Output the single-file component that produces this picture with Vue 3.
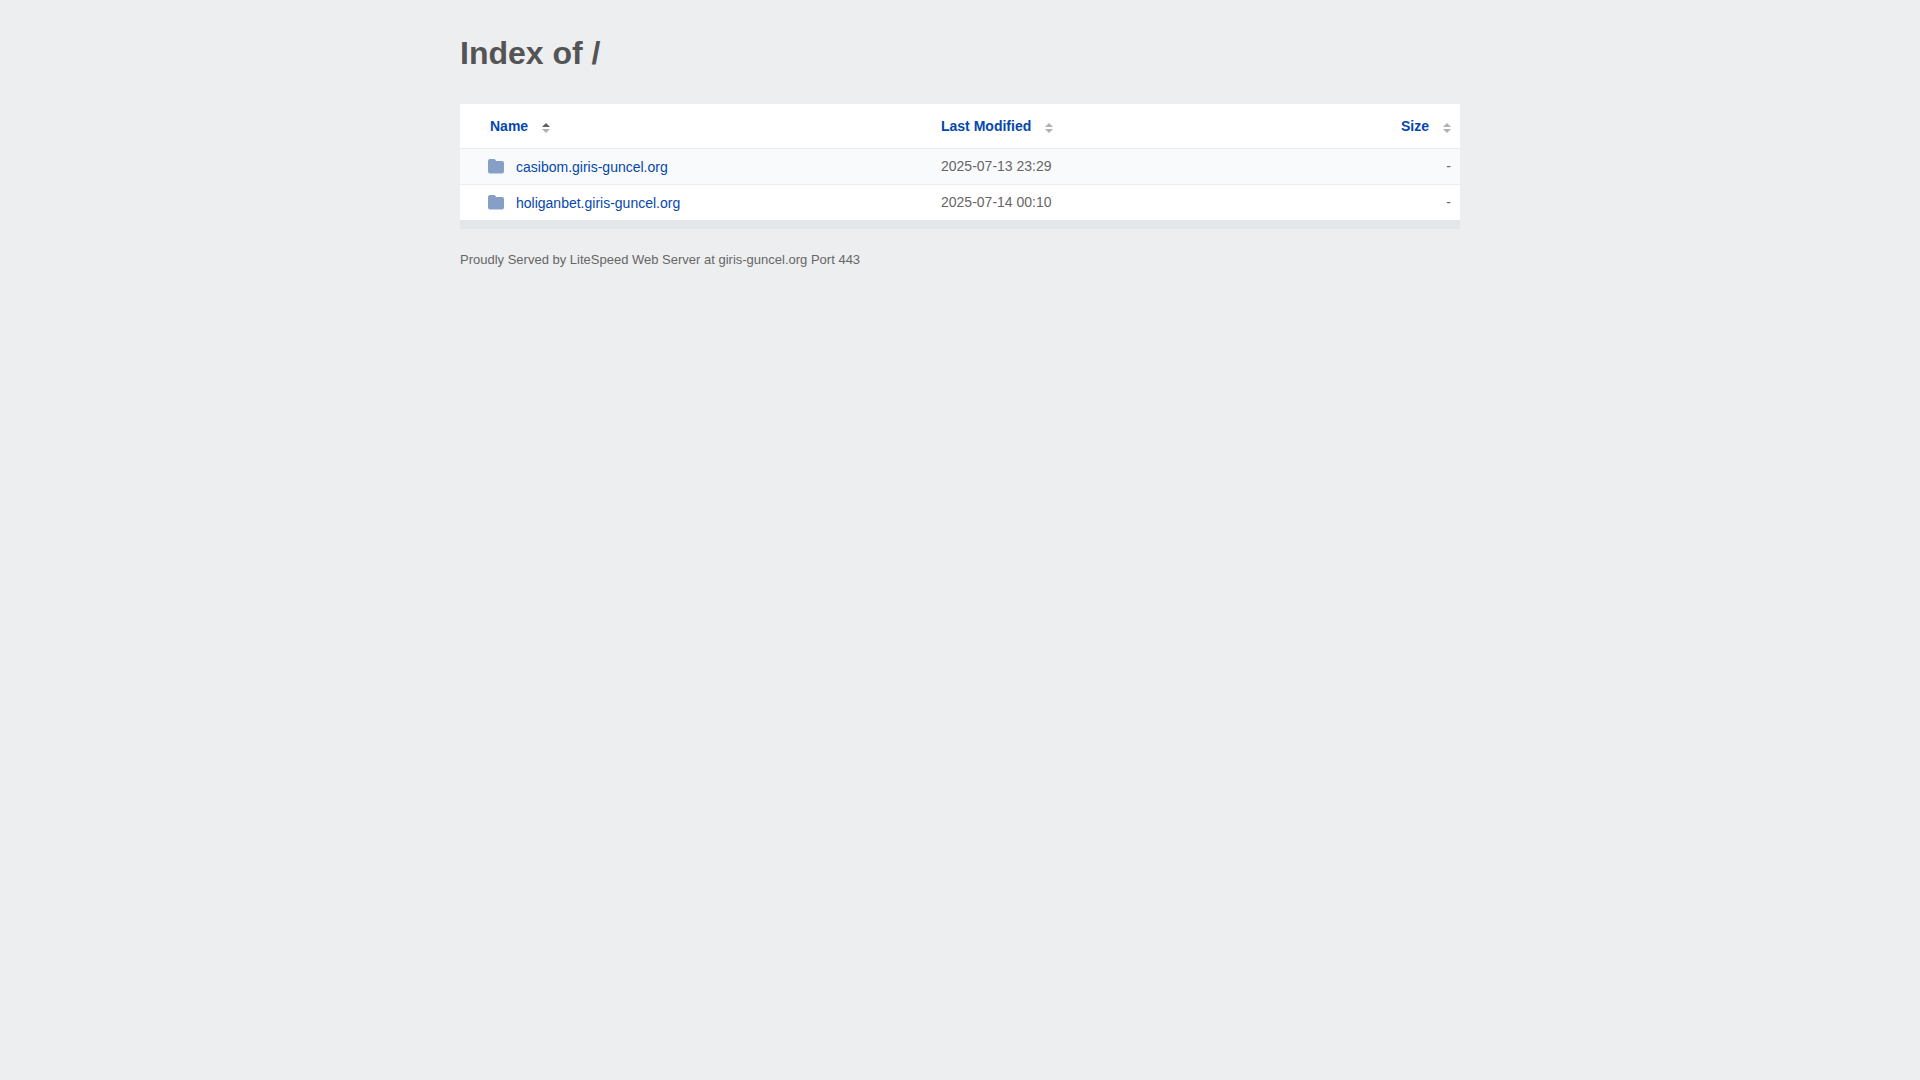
<script setup>
const columns = [
  { key: 'name', label: 'Name', sorted: true },
  { key: 'modified', label: 'Last Modified', sorted: false },
  { key: 'size', label: 'Size', sorted: false },
]

const entries = [
  { name: 'casibom.giris-guncel.org', modified: '2025-07-13 23:29', size: '-' },
  { name: 'holiganbet.giris-guncel.org', modified: '2025-07-14 00:10', size: '-' },
]
</script>

<template>
  <main class="page">
    <h1 class="title">Index of /</h1>
    <table class="listing">
      <thead>
        <tr>
          <th v-for="col in columns" :key="col.key" :class="col.key" scope="col">
            <a class="sort" href="#">
              {{ col.label }}
              <svg class="arrows" :class="{ sorted: col.sorted }" width="8" height="10" viewBox="0 0 8 10" aria-hidden="true">
                <path class="up" d="M0 4 L4 0 L8 4 Z" />
                <path class="down" d="M0 6 L8 6 L4 10 Z" />
              </svg>
            </a>
          </th>
        </tr>
      </thead>
      <tbody>
        <tr v-for="entry in entries" :key="entry.name">
          <td class="name">
            <a class="entry" :href="`/${entry.name}/`">
              <svg class="folder" width="16" height="15" viewBox="0 0 16 15" aria-hidden="true">
                <path d="M2 0 H6 Q7 0 7.5 1 L8 2 H14 Q16 2 16 4 V12.500 Q16 14.500 14 14.500 H2 Q0 14.500 0 12.500 V2 Q0 0 2 0 Z" />
              </svg>
              <span class="label">{{ entry.name }}</span>
            </a>
          </td>
          <td class="modified">{{ entry.modified }}</td>
          <td class="size">{{ entry.size }}</td>
        </tr>
      </tbody>
    </table>
    <footer class="footer">Proudly Served by LiteSpeed Web Server at giris-guncel.org Port 443</footer>
  </main>
</template>

<style>
body {
  background: #edeef0;
}
</style>

<style scoped>
.page {
  box-sizing: border-box;
  max-width: 1040px;
  margin: 0 auto;
  padding: 32px 20px;
  color: #545454;
  font-family: Arial, "Liberation Sans", sans-serif;
  font-size: 14px;
  line-height: 20px;
}

.title {
  margin: 0 0 30px;
  font-size: 32px;
  line-height: 42px;
}

.listing {
  width: 100%;
  table-layout: fixed;
  border-collapse: separate;
  border-spacing: 0;
  border-bottom: 9px solid #e3e7ea;
  background: #fff;
}

th,
td {
  padding: 0 9px;
  text-align: left;
}

th {
  height: 44px;
}

td {
  height: 28px;
  padding-top: 7px;
  border-top: 1px solid #e9ebee;
  color: #666;
  vertical-align: top;
}

tbody tr:nth-child(odd) {
  background: #f8fafc;
}

th.name {
  width: 433px;
  padding-left: 30px;
}

td.name {
  padding-left: 28px;
}

th.size,
td.size {
  width: 200px;
  text-align: right;
}

a {
  color: #0547ad;
  text-decoration: none;
}

.sort {
  display: inline-flex;
  align-items: center;
  gap: 14px;
}

.arrows {
  margin-top: 4px;
  fill: #b0b0b0;
}

.sorted .up {
  fill: #606060;
}

.entry {
  display: flex;
  align-items: center;
  gap: 12px;
}

.label {
  padding-top: 1px;
}

.folder {
  fill: #859fc7;
}

.footer {
  padding-top: 21px;
  color: #666;
  font-size: 13px;
}
</style>
